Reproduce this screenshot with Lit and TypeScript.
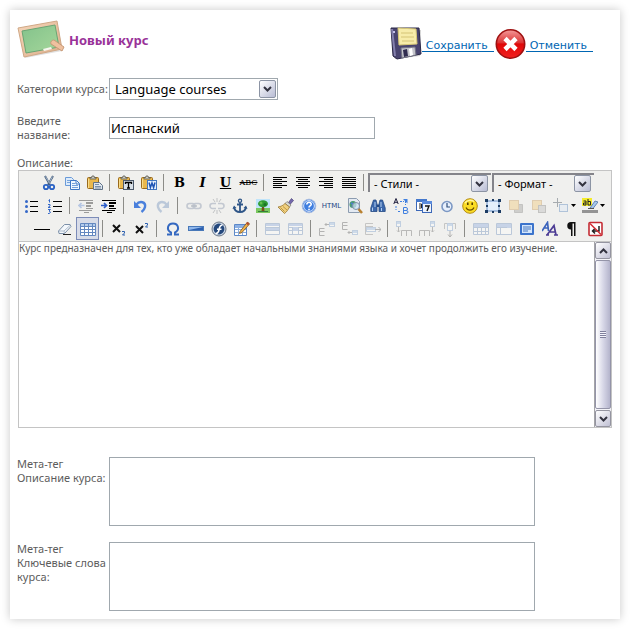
import { LitElement, html, css, svg, TemplateResult, SVGTemplateResult } from "lit";
import { customElement, property, state } from "lit/decorators.js";
import { classMap } from "lit/directives/class-map.js";

type Tool = { id: string; title: string; on?: boolean; off?: boolean; menu?: boolean } | "sep";

const lines = (rows: number[][]) =>
  svg`${rows.map(([x, y, w]) => svg`<rect x=${x} y=${y} width=${w} height="1" fill="#000" shape-rendering="crispEdges"/>`)}`;

const clip = svg`
  <rect x=".5" y="2.5" width="11" height="11" rx="1" fill="#e9b84e" stroke="#9a6a1c"/>
  <path d="M1.5 4v9" stroke="#f8dc8a"/>
  <path d="M3 4V2.500h1.500L5 1h2l.5 1.500H9V4z" fill="#c9c9c2" stroke="#5c5a50" stroke-width=".8"/>`;

const miniTable = (x: number, y: number, w: number, h: number) => svg`
  <rect x=${x + 0.5} y=${y + 0.5} width=${w - 1} height=${h - 1} fill="#fff" stroke="#6d93c9"/>
  <rect x=${x + 1} y=${y + 1} width=${w - 2} height="2" fill="#8fb2e0"/>`;

const icons: Record<string, SVGTemplateResult> = {
  cut: svg`<path d="M4 1l5 9M12 1L7 10" stroke="#49617f" stroke-width="2" fill="none"/>
    <path d="M4.500 1.500l4 7M11.500 1.500l-3 6" stroke="#b8c8dc" stroke-width=".8"/>
    <circle cx="5" cy="12" r="2.200" fill="none" stroke="#2a62c4" stroke-width="1.800"/>
    <circle cx="11" cy="12" r="2.200" fill="none" stroke="#2a62c4" stroke-width="1.800"/>`,
  copy: svg`<path d="M1.500 2.500h6l2 2v6h-8z" fill="#dcebfb" stroke="#6a9ad8"/><path d="M3 5.500h4M3 7.500h3" stroke="#78a4dc"/>
    <path d="M6.500 5.500h6l3 3v6h-9z" fill="#eff6ff" stroke="#3f76c4"/><path d="M12 6v3h3" fill="none" stroke="#3f76c4"/>
    <path d="M8 8.500h3M8 10.500h6M8 12.500h6" stroke="#74a0dc"/>`,
  paste: svg`${clip}<path d="M6.500 7.500h6l3 3v4h-9z" fill="#dfe6ee" stroke="#5f7288"/><path d="M8 9.500h4M8 11.500h6M8 13h6" stroke="#7c90a8"/>`,
  pastetext: svg`${clip}<rect x="5.500" y="5.500" width="10" height="9" fill="#d8e0e8" stroke="#4c5a6c"/><path d="M7.500 9V7.500h6V9M10.500 7.500v6M9 13h3" fill="none" stroke="#000" stroke-width="1.300"/>`,
  pasteword: svg`${clip}<rect x="6.500" y="5.500" width="9" height="9" fill="#e4effc" stroke="#4478c0"/><path d="M8 7.500l1.400 5L11 8l1.600 4.500L14 7.500" fill="none" stroke="#1d54b4" stroke-width="1.500"/>`,
  left: lines([[1, 2, 14], [1, 4, 9], [1, 6, 14], [1, 8, 9], [1, 10, 14], [1, 12, 9]]),
  center: lines([[1, 2, 14], [3, 4, 10], [1, 6, 14], [3, 8, 10], [1, 10, 14], [3, 12, 10]]),
  right: lines([[1, 2, 14], [6, 4, 9], [1, 6, 14], [6, 8, 9], [1, 10, 14], [6, 12, 9]]),
  full: lines([[1, 2, 14], [1, 4, 14], [1, 6, 14], [1, 8, 14], [1, 10, 14], [1, 12, 14]]),
  ul: svg`${lines([[6, 3, 8], [6, 8, 8], [6, 13, 8]])}<g fill="#3568c8"><circle cx="2.500" cy="3.500" r="1.500"/><circle cx="2.500" cy="8.500" r="1.500"/><circle cx="2.500" cy="13.500" r="1.500"/></g>`,
  ol: svg`${lines([[6, 3, 9], [6, 8, 9], [6, 13, 9]])}<path d="M1.500 2.500l1-1v3M1 6.500h2v1.500l-2 1.500h2.500M1 11.500h2.500l-1.500 1.500 1.500 1-1 1.500H1" fill="none" stroke="#3568c8"/>`,
  outdent: svg`<g shape-rendering="crispEdges" fill="#000"><path d="M1 2h14v1H1zM8 4h7v2H8zM8 7h5v2H8zM8 10h7v1H8zM1 12h13v1H1zM6 14h5v1H6z"/></g><path d="M6.500 7.500H1M3.500 5L1 7.500 3.500 10" fill="none" stroke="#4a7ad0" stroke-width="1.700"/>`,
  indent: svg`<g shape-rendering="crispEdges" fill="#000"><path d="M1 2h14v1H1zM8 4h7v2H8zM8 7h5v2H8zM8 10h7v1H8zM1 12h13v1H1zM6 14h5v1H6z"/></g><path d="M0 7.500h5M3 5l2.500 2.500L3 10" fill="none" stroke="#2a5cc8" stroke-width="1.700"/>`,
  undo: svg`<path d="M4 7c4-5 10-3 9 2-.4 2-1.500 3.500-3.500 5" fill="none" stroke="#4a80dc" stroke-width="2.400"/><path d="M2 3v7h7z" fill="#4a80dc"/>`,
  redo: svg`<path d="M12 7C8 2 2 4 3 9c.4 2 1.500 3.500 3.500 5" fill="none" stroke="#5a80b4" stroke-width="2.400"/><path d="M14 3v7H7z" fill="#5a80b4"/>`,
  link: svg`<rect x="1" y="5.500" width="8" height="5" rx="2.500" fill="none" stroke="#70809c" stroke-width="1.600"/><rect x="7" y="5.500" width="8" height="5" rx="2.500" fill="none" stroke="#70809c" stroke-width="1.600"/><path d="M5 8h6" stroke="#4c5c78" stroke-width="1.400"/>`,
  unlink: svg`<path d="M7 5.500H3.500a2.500 2.500 0 000 5H7M9 5.500h3.500a2.500 2.500 0 010 5H9" fill="none" stroke="#70809c" stroke-width="1.600"/><path d="M8 0v4M4 1l2 3M12 1l-2 3M8 12v4M4 15l2-3M12 15l-2-3" stroke="#6c7078"/>`,
  anchor: svg`<circle cx="8" cy="2.800" r="1.600" fill="none" stroke="#2f5688" stroke-width="1.300"/><path d="M8 4.500V14M5 6.500h6" stroke="#2f5688" stroke-width="1.800"/><path d="M2 9c.5 3.500 3 5 6 5s5.500-1.500 6-5" fill="none" stroke="#2f5688" stroke-width="1.800"/><path d="M.5 11L2 7.500 4.500 10zM15.500 11L14 7.500 11.500 10z" fill="#2f5688"/>`,
  image: svg`<rect x="1" y="1" width="14" height="14" fill="#bfe4fa"/><path d="M1 10h14v5H1z" fill="#7cc860"/><path d="M7 8h2l.5 5.500h-3z" fill="#7c4a1c"/><ellipse cx="8" cy="5.800" rx="5" ry="3.500" fill="#2f9a34"/><circle cx="6" cy="5" r="1.500" fill="#66c050"/><circle cx="10" cy="6.500" r="1.500" fill="#1c7428"/><path d="M3 13.500h10" stroke="#34803a"/>`,
  brush: svg`<path d="M10.500 4.500l3-4 2 2-3.500 4z" fill="#7468ac" stroke="#4c4478" stroke-width=".7"/><path d="M9 3.500l4 3.500-1.500 2-4.500-3.500z" fill="#d9d9d4" stroke="#77776c" stroke-width=".7"/><path d="M7 5.500l4.500 3.500C10 12 8.500 14 6.500 15.500L0 9c3-.5 5-1.500 7-3.500z" fill="#f0d080" stroke="#9c7830" stroke-width=".8"/><path d="M2.500 9.500l4 4M5 8.500l4 3.500" stroke="#c09840"/>`,
  help: svg`<circle cx="8" cy="8" r="6.800" fill="#3f7ee0" stroke="#a8bce0"/><circle cx="8" cy="8" r="5.400" fill="none" stroke="#fff" stroke-width=".8"/><path d="M5.800 6.500c0-3 4.600-2.800 4.400 0C10 8 8 7.800 8 9.500M8 10.800v1.500" fill="none" stroke="#fff" stroke-width="1.600"/>`,
  preview: svg`<path d="M1.500 .5h8l3 3v11h-11z" fill="#e4eaf2" stroke="#8c9cb0"/><circle cx="6" cy="6.500" r="3.500" fill="#4a9a70"/><path d="M4 5l2 1-1 3" stroke="#4880d0" fill="none" stroke-width="1.500"/><circle cx="9" cy="8" r="3.500" fill="#cfe4f8" fill-opacity=".7" stroke="#8090a4"/><path d="M11.500 11l3.500 4" stroke="#b88030" stroke-width="2.500"/>`,
  find: svg`<path d="M3.500 2h2.500l1 4v7.500H.8V10zM12.500 2H10L9 6v7.500h6.200V10z" fill="#3c68ac" stroke="#234a84" stroke-width=".8"/><path d="M7 6.500h2v2.500H7z" fill="#234a84"/><path d="M2.500 9.500v3.500M5 4v5M11 4v5M11.500 10v3" stroke="#b4d0f0"/>`,
  replace: svg`<path d="M.8 6L3 .5 5.200 6M1.500 4.300h3" fill="none" stroke="#1c1c3c"/><path d="M10.500 9.500v6h2.500q2 0 2-1.500t-2-1.500h-2.500M10.500 9.500H13q1.500 0 1.500 1.500T13 12.500" fill="none" stroke="#4080e0"/><path d="M7 3.500h4M12.500 3v4M3 8v4M5 13.500h3" stroke="#4080e0" stroke-dasharray="2 1"/><path d="M10 1h4.500v4.500z" fill="#4080e0"/>`,
  date: svg`<rect x=".5" y="1.500" width="10" height="11" fill="#fff" stroke="#3c68b8"/><path d="M0 1h11v3H0z" fill="#4478cc"/><path d="M3 6h2.500v4H3M3 8h2.500" fill="none" stroke="#222"/><rect x="6.500" y="3.500" width="9" height="11" fill="#eef4fc" stroke="#3c68b8"/><path d="M6 3h10v3H6z" fill="#5c8cdc"/><path d="M9 8h4l-2 5" fill="none" stroke="#111" stroke-width="1.400"/>`,
  time: svg`<circle cx="8" cy="8.500" r="5" fill="#e8f0fc" stroke="#7c98c4" stroke-width="1.600"/><path d="M8 5v4h3" fill="none" stroke="#30507c" stroke-width="1.200"/>`,
  smiley: svg`<circle cx="8" cy="8" r="7.300" fill="#fbdc24" stroke="#b48c14"/><path d="M3 5c2-3 6-3.500 9-1.500" fill="none" stroke="#fff4a0" stroke-width="1.500"/><path d="M5.800 4.500v2.500M10.200 4.500v2.500" stroke="#4c3800" stroke-width="1.500"/><path d="M4 9.500c1.500 3.500 6.500 3.500 8 0" fill="none" stroke="#6c5000" stroke-width="1.200"/>`,
  frame: svg`<rect x="2" y="3" width="12" height="10" fill="#e4effc" stroke="#6890c8"/><path d="M0 1h3v3H0zM7 1h2v2H7zM13 1h3v3h-3zM0 12h3v3H0zM7 13h2v2H7zM13 12h3v3h-3zM1 7h2v2H1zM13 7h2v2h-2z" fill="#1c3c64"/>`,
  front: svg`<path d="M8.500 6.500h6v8h-8v-3" fill="#909090" stroke="#707070"/><rect x="1.500" y="2.500" width="9" height="9" fill="#f0c060" stroke="#c08c3c"/>`,
  back: svg`<rect x="1.500" y="2.500" width="9" height="9" fill="#f0c060" stroke="#c08c3c"/><rect x="7.500" y="7.500" width="7" height="7" fill="#b4b4b4" stroke="#707070"/>`,
  insert: svg`<path d="M0 4.500h9M4.500 0v9" stroke="#202c3c"/><rect x="6.500" y="6.500" width="8" height="7" fill="#d8e6f8" stroke="#3c70b4"/>`,
  highlight: svg`<path d="M0 0h10v8H0z" fill="#f4ec2c"/><path d="M1.500 3h2.500v4H1.500V5H4M6 1v6h2.500V3.500H6" fill="none" stroke="#222"/><path d="M8 10l5-7 3 1-5 6.500z" fill="#a8c8ec" stroke="#4870a4" stroke-width=".8"/><path d="M6 10.500h6" stroke="#555"/><path d="M0 12h16v3H0z" fill="#949494"/>`,
  line: svg`<path d="M0 8h16v1H0z" fill="#000" shape-rendering="crispEdges"/>`,
  eraser: svg`<path d="M1.500 10l6-6.500h5.500l1 2-6.500 7H2z" fill="#f4f8fc" stroke="#7c90a8"/><path d="M2 10h5l6.500-6M7 10l.5 2.500" fill="none" stroke="#9cacc0" stroke-width=".8"/><path d="M6 13.500h8" stroke="#222"/>`,
  grid: svg`<path d="M1 2h14v12H1z" fill="#fff"/><path d="M1 2h14v3H1z" fill="#b4ccec"/><path d="M.5 2.500h15v12H.5zM.5 5.500h15M.5 8.500h15M.5 11.500h15M4.500 3v12M8.500 3v12M12.500 3v12" fill="none" stroke="#6488c0"/>`,
  sub: svg`<path d="M2 4l7 7M9 4l-7 7" stroke="#111" stroke-width="2"/><path d="M11 10.500h2.500V12L11.500 14H14" fill="none" stroke="#2c60b0"/>`,
  sup: svg`<path d="M2 5l7 7M9 5l-7 7" stroke="#111" stroke-width="2"/><path d="M11 2.500h2.500V4L11.500 6H14" fill="none" stroke="#2c60b0"/>`,
  omega: svg`<path d="M2 13.500h4v-2C1 9 2.500 2.500 8 2.500S15 9 10 11.500v2h4" fill="none" stroke="#3468c0" stroke-width="2"/>`,
  hr: svg`<rect x=".5" y="5.500" width="15" height="4" fill="#90b8ec" stroke="#4878b8"/><path d="M1 9L15 6v3z" fill="#2c60b0"/>`,
  flash: svg`<circle cx="8" cy="8" r="7" fill="#c8d4e4" stroke="#6c7888"/><circle cx="8" cy="8" r="5.400" fill="#24487c"/><path d="M11.500 4C8 4 8.500 8 7.500 10.500 7 12 6 12.500 4.500 12.500M6 8.300h4.500" fill="none" stroke="#fff" stroke-width="1.600"/>`,
  tableedit: svg`<path d="M.5 3.500h12v11H.5z" fill="#fff" stroke="#5c88c8"/><path d="M1 4h11v3H1z" fill="#8cb0e4"/><path d="M1 8.500h11M1 11.500h11M4.500 7v7M8.500 7v7" stroke="#8caedc"/><path d="M6 10.500L13.500 1l2 2L8 11.500l-2.500 1z" fill="#f0b44c" stroke="#7c5420" stroke-width=".8"/><path d="M12 2.500L13.500 .8l2 2L14 4.500z" fill="#b45030"/>`,
  rowprops: svg`<path d="M.5 2.500h14v11H.5zM.5 6.500h14M.5 9.500h14M5.500 6v4M10.500 6v4" fill="#fff" stroke="#5c80b4"/><path d="M1 3h13v2H1zM1 7h13v2H1z" fill="#7ca0dc"/>`,
  cellprops: svg`<path d="M.5 2.500h14v11H.5zM.5 6.500h14M.5 9.500h14M4.500 6v7M10.500 6v7" fill="#fff" stroke="#5c80b4"/><path d="M1 3h13v2H1zM5 6h5v4H5z" fill="#7ca0dc"/>`,
  rowbefore: svg`<path d="M5.500 7.500h-5v3h5M.5 10.500v4h5" fill="none" stroke="#444"/>${miniTable(10, 1, 6, 5)}<path d="M10 3.500H6M7.500 2L6 3.500 7.500 5" fill="none" stroke="#444"/>`,
  rowafter: svg`<path d="M5.500 1.500h-5v3h5M.5 4.500v4h5" fill="none" stroke="#444"/>${miniTable(10, 9, 6, 5)}<path d="M10 11.500H6M7.500 10L6 11.500 7.500 13" fill="none" stroke="#444"/>`,
  rowdelete: svg`<path d="M8 2.500H.5v11H8M.5 5.500H8M.5 10.500H8" fill="none" stroke="#777"/>${miniTable(1, 6, 10, 5)}<path d="M10 8.500h6M13.500 6L16 8.500 13.500 11" fill="none" stroke="#444"/>`,
  colbefore: svg`${miniTable(0, 0, 5, 6)}<path d="M5.500 15V9.500h10V15M10.500 9.500V15M2.500 6v5M1 9.500L2.500 11 4 9.500" fill="none" stroke="#555"/>`,
  colafter: svg`${miniTable(11, 0, 5, 6)}<path d="M.5 15V9.500h10V15M5.500 9.500V15M13.500 6v5M12 9.500l1.500 1.500L15 9.500" fill="none" stroke="#555"/>`,
  coldelete: svg`<path d="M2.500 8V2.500h11V8M6 2.500V8M10 2.500V8" fill="none" stroke="#777"/>${miniTable(5, 2, 6, 8)}<path d="M8 10v6M6 13.500L8 16l2-2.500" fill="none" stroke="#444"/>`,
  split: svg`<path d="M.5 2.500h15v11H.5zM.5 6.500h15M.5 10.500h15M4.500 6v8M8.500 6v8M12.500 6v8" fill="#fff" stroke="#5c80b4"/><path d="M1 3h14v3H1z" fill="#7ca0dc"/>`,
  merge: svg`<path d="M.5 2.500h15v11H.5zM.5 6.500h15M4.500 6v8" fill="#fff" stroke="#5c80b4"/><path d="M1 3h14v3H1zM11 3h4v4h-4z" fill="#7ca0dc"/>`,
  div: svg`<rect x="1" y="2" width="14" height="12" rx="1" fill="#3c74cc"/><rect x="3" y="4" width="10" height="8" fill="#d4e6fc"/><path d="M4 6h8M4 8h8M4 10h5" stroke="#4878c0"/>`,
  styleprops: svg`<path d="M0 10L5.500 1.500l1 8.500M2.500 7h4" fill="none" stroke="#3c64bc" stroke-width="1.700"/><path d="M5 14l7-9.500 2 9.500M8 11h5.500M4 14h3M12 14h4" fill="none" stroke="#4c3c94" stroke-width="1.700"/>`,
  pilcrow: svg`<path d="M10 1H6a3.500 3.500 0 000 7.500V15h1.500V2.500H9V15h1.500V1z" fill="#111"/>`,
  nbsp: svg`<rect x="1" y="1.500" width="13" height="13" rx="1" fill="#fff" stroke="#c42c34" stroke-width="1.600"/><path d="M11 5v5H5M7 7.500L4.500 10 7 12.500" fill="none" stroke="#222" stroke-width="1.500"/><path d="M2 2.500l11 11" stroke="#d42c34" stroke-width="1.500"/>`,
};

const glyphs: Record<string, TemplateResult> = {
  bold: html`<b class="glyph">B</b>`,
  italic: html`<b class="glyph slant">I</b>`,
  underline: html`<b class="glyph under">U</b>`,
  strike: html`<s class="glyph small">ABC</s>`,
  source: html`<span class="glyph source">HTML</span>`,
};

const t = (id: string, title: string, extra = {}): Tool => ({ id, title, ...extra });
const off = { off: true };

const rowOne: Tool[] = [
  t("cut", "Вырезать"), t("copy", "Копировать"), t("paste", "Вставить"), "sep",
  t("pastetext", "Вставить текст"), t("pasteword", "Вставить из Word"), "sep",
  t("bold", "Жирный"), t("italic", "Курсив"), t("underline", "Подчёркнутый"), t("strike", "Зачёркнутый"), "sep",
  t("left", "По левому краю"), t("center", "По центру"), t("right", "По правому краю"), t("full", "По ширине"), "sep",
];
const rowTwo: Tool[] = [
  t("ul", "Маркированный список"), t("ol", "Нумерованный список"), "sep",
  t("outdent", "Уменьшить отступ", off), t("indent", "Увеличить отступ"), "sep",
  t("undo", "Отменить действие"), t("redo", "Повторить", off), "sep",
  t("link", "Ссылка", off), t("unlink", "Убрать ссылку", off), t("anchor", "Якорь"), t("image", "Изображение"),
  t("brush", "Очистить код"), t("help", "Справка"), t("source", "Исходный код"), t("preview", "Просмотр"),
  t("find", "Найти"), t("replace", "Заменить"), t("date", "Дата"), t("time", "Время"), t("smiley", "Смайлик"),
  t("frame", "Слой"), t("front", "На передний план", off), t("back", "На задний план", off),
  t("insert", "Вставить слой", { off: true, menu: true }), t("highlight", "Цвет фона", { menu: true }),
];
const rowThree: Tool[] = [
  t("line", "Линия"), t("eraser", "Убрать формат"), t("grid", "Границы таблицы", { on: true }), "sep",
  t("sub", "Подстрочный"), t("sup", "Надстрочный"), "sep",
  t("omega", "Символ"), t("hr", "Разделитель"), t("flash", "Flash"), t("tableedit", "Таблица"), "sep",
  t("rowprops", "Свойства строки", off), t("cellprops", "Свойства ячейки", off), "sep",
  t("rowbefore", "Строка выше", off), t("rowafter", "Строка ниже", off), t("rowdelete", "Удалить строку", off), "sep",
  t("colbefore", "Столбец слева", off), t("colafter", "Столбец справа", off), t("coldelete", "Удалить столбец", off), "sep",
  t("split", "Разделить ячейки", off), t("merge", "Объединить ячейки", off), t("div", "Блок"),
  t("styleprops", "Стиль"), t("pilcrow", "Непечатаемые знаки"), t("nbsp", "Неразрывный пробел"),
];

const chevron = (up = false) => html`<svg class="chevron" viewBox="0 0 9 6" width="9" height="6" aria-hidden="true">
  <path d=${up ? "M1 5l3.500-3.500L8 5" : "M1 1l3.500 3.500L8 1"} fill="none" stroke="#333340" stroke-width="2"/></svg>`;

@customElement("pick-list")
class PickList extends LitElement {
  static styles = css`
    :host { display: block; position: relative; box-sizing: border-box; height: 22px; border: 1px solid #a0a8ae; background: #fff; }
    :host([flat]) { height: 19px; border: 0 solid #84848a; border-width: 2px 0 0 2px; background: #f0f0ee; }
    select { appearance: none; width: 100%; height: 100%; padding: 0 20px 0 5px; border: 0; background: none; color: #000;
      font: 13px/20px "Noto Sans", sans-serif; display: block; outline: none; }
    :host([flat]) select { font: 11px/17px "Noto Sans", sans-serif; padding-left: 4px; }
    .knob { position: absolute; top: 1px; right: 1px; bottom: 1px; width: 17px; box-sizing: border-box; border: 1px solid #8c94a4;
      border-radius: 2px; background: linear-gradient(135deg, #fff, #b8bcd4); display: flex; align-items: center; justify-content: center; pointer-events: none; }
    :host([flat]) .knob { top: 0; bottom: 0; right: 3px; }
  `;
  @property() label = "";
  @property({ attribute: false }) options: string[] = [];
  render() {
    return html`<select aria-label=${this.label}>${this.options.map((o) => html`<option>${o}</option>`)}</select>
      <span class="knob">${chevron()}</span>`;
  }
}

@customElement("tool-row")
class ToolRow extends LitElement {
  static styles = css`
    :host { display: flex; align-items: center; height: 23px; }
    button { all: unset; box-sizing: border-box; width: 23px; height: 23px; display: flex; align-items: center; justify-content: center; flex: none; }
    button.on { border: 1px solid #7c8cb8; background: #d8dce8; }
    button.off svg:first-of-type { opacity: 0.35; }
    button.menu { width: 29px; gap: 2px; }
    svg { display: block; flex: none; }
    .sep { width: 1px; height: 17px; margin: 0 4px 0 3px; background: #8c8c88; flex: none; }
    .glyph { font: bold 13px/16px "DejaVu Serif", serif; color: #000; }
    .slant { font-style: italic; }
    .under { text-decoration: underline; }
    .small { font: 8px/16px "DejaVu Serif", serif; }
    .source { font: 7px/16px "DejaVu Sans", sans-serif; color: #1c4484; }
  `;
  @property({ attribute: false }) tools: Tool[] = [];
  render() {
    return html`${this.tools.map((tool) =>
      tool === "sep"
        ? html`<span class="sep"></span>`
        : html`<button class=${classMap({ on: !!tool.on, off: !!tool.off, menu: !!tool.menu })} title=${tool.title} aria-label=${tool.title}>
            ${glyphs[tool.id] ?? html`<svg viewBox="0 0 16 16" width="16" height="16" aria-hidden="true">${icons[tool.id]}</svg>`}
            ${tool.menu ? html`<svg viewBox="0 0 5 3" width="5" height="3"><path d="M0 0h5L2.500 3z" fill="#000"/></svg>` : ""}
          </button>`
    )}<slot></slot>`;
  }
}

@customElement("app-root")
class AppRoot extends LitElement {
  static styles = css`
    :host { display: block; padding: 10px; background: #fff; color: #5c5c5c; font: 11px/14px "Noto Sans", sans-serif; }
    .card { background: #fff; padding: 10px 8px 8px 7px; box-shadow: 0 0 9px #c8c8c8; }
    header { display: flex; align-items: center; justify-content: space-between; height: 40px; margin-bottom: 18px; padding-right: 19px; }
    .heading { display: flex; align-items: center; gap: 4px; }
    h1 { margin: 0; font: bold 13px/18px "Noto Sans", sans-serif; color: #993399; }
    nav { display: flex; gap: 1px; padding-top: 8px; }
    nav a { display: flex; align-items: center; color: #0066b3; text-decoration: none; font: 11px/11px "DejaVu Sans", sans-serif; }
    nav span { padding: 4px 6px 0 4px; border-bottom: 1px solid #0066b3; }
    svg { display: block; flex: none; }
    .row { display: grid; grid-template-columns: 92px minmax(0, 1fr); align-items: center; margin-bottom: 14px; }
    .row.top { align-items: start; margin-bottom: 16px; }
    .row.last { margin-bottom: 0; }
    .category { width: 169px; }
    input, textarea { box-sizing: border-box; margin: 0; border: 1px solid #a0a8ae; border-radius: 0; outline: none; background: #fff; resize: none; display: block; }
    input { width: 266px; max-width: 100%; height: 22px; padding: 0 1px; font: 13px/20px "Noto Sans", sans-serif; color: #000; }
    .meta { width: 426px; max-width: 100%; height: 69px; }
    .caption { display: block; }
    .editor { margin: 0 0 29px 1px; border: 1px solid #c4c4c4; }
    .bars { background: #f0f0ee; padding: 0 0 1px; border-bottom: 1px solid #c4c4c4; }
    .one { padding-left: 18px; }
    .two { padding-left: 1px; }
    .three { padding-left: 11px; }
    .styles { width: 123px; }
    .formats { width: 102px; margin-left: 1px; }
    .body { display: flex; height: 185px; }
    .body textarea { flex: 1; border: 0; padding: 0; height: auto; font: 10px/12px "Noto Sans", sans-serif; color: #5c5c5c; overflow: hidden; }
    .scroll { width: 17px; display: flex; flex-direction: column; gap: 1px; background: #f4f4f8; border-left: 1px solid #a4a4a8; box-sizing: border-box; }
    .scroll button { all: unset; box-sizing: border-box; height: 17px; border: 1px solid #9494a0; border-radius: 2px; background: linear-gradient(135deg, #fff, #c0c0d4); display: flex; align-items: center; justify-content: center; }
    .thumb { flex: 1; box-sizing: border-box; border: 1px solid #9494a8; border-radius: 2px; background: linear-gradient(90deg, #fff, #d8d8e8 50%, #b4b4cc); display: flex; align-items: center; justify-content: center; }
    .grip { width: 6px; height: 7px; background: repeating-linear-gradient(#80809c 0 1px, #f4f4fc 1px 2px); }
  `;

  @state() private text =
    "Курс предназначен для тех, кто уже обладает начальными знаниями языка и хочет продолжить его изучение.";

  render() {
    return html`
      <main class="card">
        <header>
          <div class="heading">
            <svg viewBox="0 0 48 40" width="48" height="40" aria-hidden="true">
              <defs>
                <linearGradient id="board" x2="1" y2="1"><stop stop-color="#83c28b"/><stop offset="1" stop-color="#a5d79b"/></linearGradient>
                <linearGradient id="wood" x2="1" y2="1"><stop stop-color="#f6d6ba"/><stop offset="1" stop-color="#dcae8a"/></linearGradient>
              </defs>
              <path d="M3 10l5 28 37-7-3-22z" fill="#ccc" opacity=".6"/>
              <path d="M1 8L40 1l5 28-38 8z" fill="url(#wood)" stroke="#d0a886"/>
              <path d="M5 11l33-6 4 22-33 6z" fill="url(#board)" stroke="#6aa574"/>
              <path d="M26 29l8-2 1 2-8 2z" fill="#f7f7ef"/>
              <path d="M37 20l10 7-2 4-11-7c-1-2 1-4 3-4z" fill="#efc19f" stroke="#c89a78"/>
            </svg>
            <h1>Новый курс</h1>
          </div>
          <nav>
            <a href="#save">
              <svg viewBox="0 0 32 34" width="32" height="34" aria-hidden="true">
                <path d="M2 3L1 2 5 32l25-3 1-26z" fill="#aaa" opacity=".5"/>
                <path d="M1 1h28l2 26-24 5-4-3z" fill="#49446f" stroke="#2b2847"/>
                <path d="M2 2l3 27" stroke="#8480ad" stroke-width="2"/>
                <path d="M8 1l18 1 1 15-18 1z" fill="#f7ecaa" stroke="#d7c877"/>
                <path d="M11 6h12M11 10h13M12 14h12" stroke="#d5c476"/>
                <path d="M11 21l14-1 1 8-14 3z" fill="#c5c5cc" stroke="#747485"/>
                <path d="M13 23l4-1 1 7-4 1z" fill="#302c50"/><path d="M19 22l3-1 1 7-3 1z" fill="#fff"/>
                <path d="M3 4h2v2H3z" fill="#c5c1e8"/>
              </svg>
              <span>Сохранить</span>
            </a>
            <a href="#cancel">
              <svg viewBox="0 0 31 32" width="31" height="32" aria-hidden="true">
                <defs><linearGradient id="red" x2="0" y2="1"><stop stop-color="#f49a9a"/><stop offset=".45" stop-color="#dd3535"/><stop offset=".5" stop-color="#df0808"/><stop offset="1" stop-color="#f32020"/></linearGradient></defs>
                <circle cx="15.500" cy="16" r="14.200" fill="url(#red)" stroke="#9e1010" stroke-width="1.600"/>
                <path d="M10 10.500l11 11M21 10.500l-11 11" stroke="#fff" stroke-width="4.600"/>
              </svg>
              <span>Отменить</span>
            </a>
          </nav>
        </header>

        <div class="row">
          <span>Категории курса:</span>
          <pick-list class="category" label="Категории курса" .options=${["Language courses"]}></pick-list>
        </div>
        <div class="row">
          <label for="name">Введите<br />название:</label>
          <input id="name" .value=${"Испанский"} />
        </div>

        <label class="caption" for="description">Описание:</label>
        <section class="editor">
          <div class="bars">
            <tool-row class="one" .tools=${rowOne}>
              <pick-list flat class="styles" label="Стили" .options=${["- Стили -"]}></pick-list>
              <pick-list flat class="formats" label="Формат" .options=${["- Формат -"]}></pick-list>
            </tool-row>
            <tool-row class="two" .tools=${rowTwo}></tool-row>
            <tool-row class="three" .tools=${rowThree}></tool-row>
          </div>
          <div class="body">
            <textarea id="description" .value=${this.text} @input=${(e: Event) => (this.text = (e.target as HTMLTextAreaElement).value)}></textarea>
            <div class="scroll">
              <button aria-label="Прокрутить вверх">${chevron(true)}</button>
              <div class="thumb"><span class="grip"></span></div>
              <button aria-label="Прокрутить вниз">${chevron()}</button>
            </div>
          </div>
        </section>

        <div class="row top">
          <label for="meta-description">Мета-тег<br />Описание курса:</label>
          <textarea class="meta" id="meta-description"></textarea>
        </div>
        <div class="row top last">
          <label for="meta-keywords">Мета-тег<br />Ключевые слова курса:</label>
          <textarea class="meta" id="meta-keywords"></textarea>
        </div>
      </main>
    `;
  }
}
